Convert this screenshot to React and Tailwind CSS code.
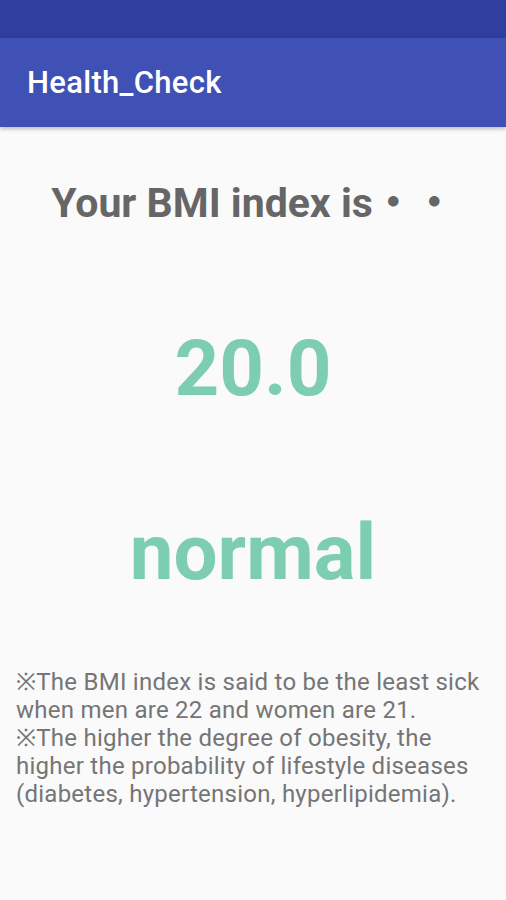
export default function App() {
  return (
    <div className="min-h-[900px] flex flex-col bg-[#fafafa] font-['Roboto',sans-serif]">
      <div className="h-[38px] bg-[#303f9f]" />
      <div className="h-[89px] bg-[#3f51b5] flex items-center px-[27px] shadow-[0_2px_4px_rgba(0,0,0,0.25)] relative">
        <h1 className="text-white text-[31px] font-medium leading-none tracking-[0.3px]">Health_Check</h1>
      </div>
      <div className="flex flex-col items-center">
        <p className="mt-[56px] text-[41px] font-bold text-[#666666] leading-none font-['Roboto','Noto_Sans_CJK_JP',sans-serif]">
          Your BMI index is・・
        </p>
        <p className="mt-[106px] text-[78px] font-bold text-[#7dcdb0] leading-none">20.0</p>
        <p className="mt-[106px] text-[78px] font-bold text-[#7dcdb0] leading-none">normal</p>
      </div>
      <div className="mt-[76px] px-4 text-[24px] leading-[28px] tracking-[0.25px] text-[#757575]">
        <p>※The BMI index is said to be the least sick when men are 22 and women are 21.</p>
        <p>※The higher the degree of obesity, the higher the probability of lifestyle diseases (diabetes, hypertension, hyperlipidemia).</p>
      </div>
    </div>
  );
}
